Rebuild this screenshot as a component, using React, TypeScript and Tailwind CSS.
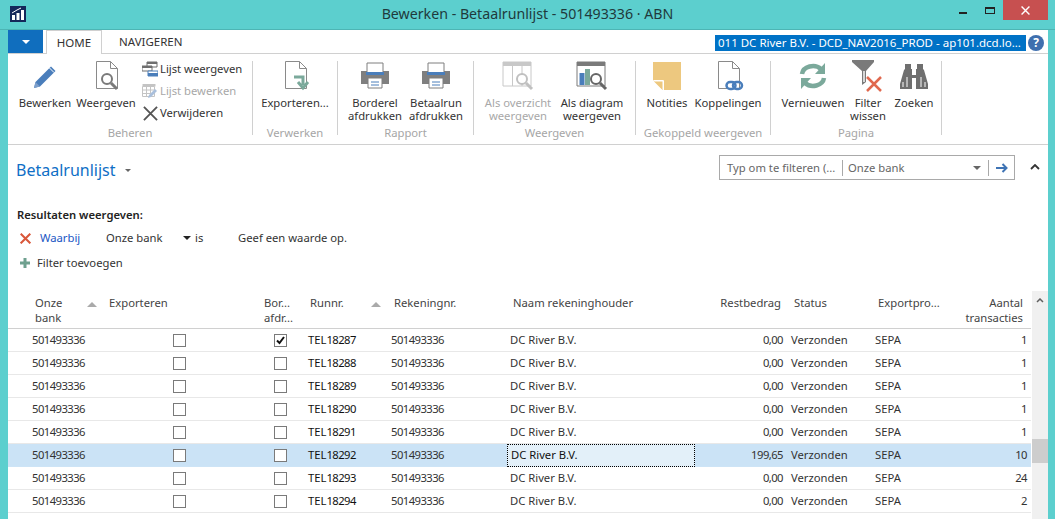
import type { ReactNode } from "react";

const font = { fontFamily: '"Noto Sans", "Open Sans", sans-serif' };

/* ribbon icons */
const Pencil = () => (
  <svg width="24" height="26" viewBox="0 0 24 26">
    <path d="M1 25l1.500-6L18 3.500l4.500 4.500L7 23.500z" fill="#4a7ebb" />
    <path d="M1 25l1.500-6 4.500 4.500z" fill="#7d9fcb" />
    <path d="M16.500 5l4.500 4.500" stroke="#fff" strokeWidth="1" />
  </svg>
);

const Doc = ({ children }: { children?: ReactNode }) => (
  <svg width="32" height="32" viewBox="0 0 32 32">
    <path d="M6.500 1.500h14l7 7v20h-21z" fill="#fff" stroke="#8a8a8a" />
    <path d="M20.500 1.500v7h7" fill="none" stroke="#8a8a8a" />
    {children}
  </svg>
);

const Lens = ({ x, y, c = "#7a7a7a" }: { x: number; y: number; c?: string }) => (
  <g transform={`translate(${x} ${y})`}>
    <circle cx="6" cy="6" r="5" fill="#fff" stroke={c} strokeWidth="2" />
    <path d="M10 10l6 6" stroke={c} strokeWidth="3" />
  </g>
);

const Printer = () => (
  <svg width="30" height="28" viewBox="0 0 30 28">
    <path d="M1 9h28v13H1z" fill="#7f7f7f" />
    <path d="M7 1h16v11H7z" fill="#fff" stroke="#7f7f7f" />
    <path d="M6 10h18v3H6z" fill="#4a7ebb" />
    <path d="M8 16h14v10H8z" fill="#fff" stroke="#7f7f7f" />
    <path d="M11 20h8M11 23h8" stroke="#4a7ebb" />
  </svg>
);

const GridLens = () => (
  <svg width="32" height="30" viewBox="0 0 32 30">
    <path d="M1 1h28v4H1z" fill="#c8c8c8" />
    <path d="M1 1h28v24H1zM10.500 5v20M20 5v20" fill="none" stroke="#c8c8c8" />
    <Lens x={14} y={12} c="#c0c0c0" />
  </svg>
);

const ChartLens = () => (
  <svg width="32" height="30" viewBox="0 0 32 30">
    <path d="M1 1h28v4H1z" fill="#7a7a7a" />
    <path d="M1 1h28v24H1z" fill="none" stroke="#7a7a7a" />
    <path d="M3.500 12h5v12h-5z" fill="#4a7ebb" />
    <path d="M9 8h5v16H9z" fill="#7ba99b" />
    <Lens x={14} y={12} c="#666" />
  </svg>
);

const Note = () => (
  <svg width="28" height="28" viewBox="0 0 28 28">
    <path d="M0 0h28v28H10L0 18z" fill="#edc87f" />
    <path d="M0 18h10v10z" fill="#fff" />
    <path d="M1 18.500h9.500V28" fill="none" stroke="#fff" />
    <path d="M1 19.500l8.500 8.500v-8.500z" fill="#edc87f" />
  </svg>
);

const Refresh = () => (
  <svg width="28" height="28" viewBox="0 0 28 28" fill="none">
    <path d="M3 12a11 9 0 0 1 19-5" stroke="#7ba99b" strokeWidth="4.500" />
    <path d="M26 1v11H16z" fill="#7ba99b" />
    <path d="M25 16a11 9 0 0 1-19 5" stroke="#7ba99b" strokeWidth="4.500" />
    <path d="M2 27V16h10z" fill="#7ba99b" />
  </svg>
);

const FilterX = () => (
  <svg width="32" height="32" viewBox="0 0 32 32">
    <path d="M0 0h22v2L14 11v11l-4 3V11L0 2z" fill="#7a7a7a" />
    <path d="M11 11h2v11h-2z" fill="#d8d8d8" />
    <path d="M15 17l14 14M29 17L15 31" stroke="#e0694f" strokeWidth="2.500" />
  </svg>
);

const Binoculars = () => (
  <svg width="28" height="26" viewBox="0 0 28 26">
    <path d="M5 1h6v5h1v6h4V6h1V1h6v5l1 1 4 14v5H16V15h-4v11H0v-5L4 7l1-1z" fill="#6f6f6f" />
    <path d="M3 19v5M7 14v10M21 14v10M25 19v5" stroke="#fff" />
  </svg>
);

const ListIcon = () => (
  <svg width="16" height="16" viewBox="0 0 16 16">
    <path d="M5 1h10v5H5z" fill="#fff" stroke="#6f6f6f" />
    <path d="M5 1h10v2H5z" fill="#6f6f6f" />
    <path d="M0 5h10v5H0z" fill="#fff" stroke="#6f6f6f" />
    <path d="M0 5h10v2H0z" fill="#6f6f6f" />
    <path d="M6 10h10v5H6z" fill="#fff" stroke="#4a7ebb" />
    <path d="M6 12h10v3H6z" fill="#4a7ebb" />
  </svg>
);

const EditListIcon = () => (
  <svg width="16" height="16" viewBox="0 0 16 16">
    <path d="M.500 3.500h12v10H.500zM4.500 3.500v10M8.500 3.500v10M.500 7h12M.500 10.500h12" fill="#fff" stroke="#c4c4c4" />
    <path d="M.500 1h13v2.500H.500z" fill="#c4c4c4" />
    <path d="M6 15l1-3 6-6 2 2-6 6z" fill="#a9bfdc" />
  </svg>
);

const Cross = ({ size, color, w }: { size: number; color: string; w: number }) => (
  <svg width={size} height={size} viewBox="0 0 16 16">
    <path d="M1 1l14 14M15 1L1 15" stroke={color} strokeWidth={w} />
  </svg>
);

const Check = ({ on }: { on?: boolean }) => (
  <span className="flex h-[13px] w-[13px] items-center justify-center border border-[#7a7a7a] bg-white">
    {on && (
      <svg width="9" height="9" viewBox="0 0 9 9">
        <path d="M1 4.500l2.500 2.500L8 1" fill="none" stroke="#111" strokeWidth="2" />
      </svg>
    )}
  </span>
);

function Btn({ w, icon, label, off }: { w: string; icon: ReactNode; label: ReactNode; off?: boolean }) {
  return (
    <div className={`flex flex-col items-center ${w}`}>
      <div className="flex h-[30px] w-full items-center justify-center">{icon}</div>
      <div className={`mt-[5px] text-center text-[11.25px] leading-[13px] whitespace-nowrap ${off ? "text-[#a8a8a8]" : "text-[#333]"}`}>
        {label}
      </div>
    </div>
  );
}

function Group({ w, pad, label, children }: { w: string; pad: string; label: string; children: ReactNode }) {
  return (
    <div className={`flex h-[74px] flex-col border-r border-[#d0d0d0] ${w}`}>
      <div className={`flex h-[65px] shrink-0 ${pad}`}>{children}</div>
      <div className="shrink-0 text-center text-[11.25px] leading-[14px] whitespace-nowrap text-[#a6a6a6]">{label}</div>
    </div>
  );
}

const SmallBtn = ({ icon, label, off }: { icon: ReactNode; label: string; off?: boolean }) => (
  <div className={`flex h-[22px] items-center gap-[2px] text-[11.25px] ${off ? "text-[#a8a8a8]" : "text-[#333]"}`}>
    <span className="flex w-4 justify-center">{icon}</span>
    {label}
  </div>
);

const cols = "grid grid-cols-[96px_150px_52px_83px_118px_188px_93px_84px_84px_74px]";
const digits = "tracking-[-0.55px]";

const runs = [
  ["18287", "0,00", "1"],
  ["18288", "0,00", "1"],
  ["18289", "0,00", "1"],
  ["18290", "0,00", "1"],
  ["18291", "0,00", "1"],
  ["18292", "199,65", "10"],
  ["18293", "0,00", "24"],
  ["18294", "0,00", "2"],
];

function Row({ run, amount, count, idx }: { run: string; amount: string; count: string; idx: number }) {
  const sel = idx === 5;
  return (
    <div className={`${cols} h-[23px] items-center border-b text-[11.25px] text-[#333] ${sel ? "border-[#cde4f6] bg-[#cbe3f6]" : "border-[#e8e8e8]"}`}>
      <div className={`pb-[1px] pl-[24px] ${digits}`}>501493336</div>
      <div className="flex justify-center"><Check /></div>
      <div className="flex justify-center"><Check on={idx === 0} /></div>
      <div className="pb-[1px] pl-[2px] text-[#111]">TEL<span className={digits}>{run}</span></div>
      <div className={`pb-[1px] pl-[2px] ${digits}`}>501493336</div>
      <div className={`flex h-[23px] items-center pb-[1px] pl-[3px] ${sel ? "border border-dotted border-black bg-[#e3f0f9] pl-[2px] text-[#111]" : ""}`}>
        DC River B.V.
      </div>
      <div className={`pr-[5px] pb-[1px] text-right ${digits}`}>{amount}</div>
      <div className="pb-[1px] pl-[3px]">Verzonden</div>
      <div className="pb-[1px] pl-[3px]">SEPA</div>
      <div className={`pr-[3px] pb-[1px] text-right ${digits}`}>{count}</div>
    </div>
  );
}

export default function App() {
  return (
    <div style={font} className="flex h-[519px] w-[1055px] flex-col overflow-hidden bg-[#5ccfce]">
      {/* title bar */}
      <div className="relative flex h-[30px] shrink-0 items-center justify-center border-b border-[#4db5b4] pb-[1px] text-[14.2px] text-[#1f3a3c]">
        <svg className="absolute top-[6px] left-[10px]" width="16" height="16" viewBox="0 0 16 16">
          <path d="M0 0h16v16H0z" fill="#14285a" />
          <path d="M2 9h3v5H2zM6.500 7h3v7h-3zM11 4h3v10h-3z" fill="#fff" />
          <path d="M2 7l5-3 4-2" fill="none" stroke="#fff" />
        </svg>
        Bewerken - Betaalrunlijst - 501493336 · ABN
        <div className="absolute top-0 right-[7px] flex items-start">
          <span className="mt-[12px] mr-[18px] h-[2px] w-[8px] bg-[#222]" />
          <span className="mt-[7px] mr-[8px] h-[7px] w-[10px] border border-t-2 border-[#222]" />
          <span className="flex h-[20px] w-[45px] items-center justify-center bg-[#c75050]">
            <Cross size={9} color="#fff" w={2.500} />
          </span>
        </div>
      </div>

      <div className="mr-[7px] ml-[8px] flex min-h-0 flex-1 flex-col bg-white">
        {/* tabs */}
        <div className="flex h-[24px] shrink-0 items-end border-b border-[#d0d0d0] text-[11.5px] text-[#333]">
          <div className="flex h-[23px] w-[35px] items-center justify-center bg-[#106ebe]">
            <span className="border-x-[4px] border-t-[4px] border-x-transparent border-t-white" />
          </div>
          <div className="relative top-[1px] ml-[3px] flex h-[24px] w-[56px] items-center justify-center border-x border-t border-[#d0d0d0] bg-white">
            HOME
          </div>
          <div className="ml-[17px] flex h-[23px] items-center">NAVIGEREN</div>
          <div className="mr-[22px] mb-[2px] ml-auto flex h-[16px] w-[311px] items-center bg-[#0072c6] pl-[3px] text-[11.5px] whitespace-nowrap text-white">
            011 DC River B.V. - DCD_NAV2016_PROD - ap101.dcd.lo...
          </div>
          <span className="absolute top-[35px] left-[1028px] flex h-4 w-4 items-center justify-center rounded-full bg-[#3f6fae] text-[12px] leading-none font-bold text-white">
            ?
          </span>
        </div>

        {/* ribbon */}
        <div className="flex h-[91px] shrink-0 border-b border-[#d0d0d0] pt-[7px]">
          <Group w="w-[245px]" pad="pl-[7px]" label="Beheren">
            <Btn w="w-[60px]" icon={<Pencil />} label="Bewerken" />
            <Btn w="w-[62px]" label="Weergeven" icon={<Doc><Lens x={11} y={13} /></Doc>} />
            <div className="-mt-[3px] ml-[5px]">
              <SmallBtn icon={<ListIcon />} label="Lijst weergeven" />
              <SmallBtn icon={<EditListIcon />} label="Lijst bewerken" off />
              <SmallBtn icon={<Cross size={15} color="#555" w={2} />} label="Verwijderen" />
            </div>
          </Group>
          <Group w="w-[85px]" pad="" label="Verwerken">
            <Btn
              w="w-[84px]"
              label="Exporteren..."
              icon={
                <Doc>
                  <path d="M15 17h9v8M19 22l5 6 5-6" fill="none" stroke="#7ba99b" strokeWidth="3" />
                </Doc>
              }
            />
          </Group>
          <Group w="w-[136px]" pad="pl-[7px] gap-[1px]" label="Rapport">
            <Btn w="w-[60px]" icon={<Printer />} label={<>Borderel<br />afdrukken</>} />
            <Btn w="w-[60px]" icon={<Printer />} label={<>Betaalrun<br />afdrukken</>} />
          </Group>
          <Group w="w-[162px]" pad="pl-[8px] gap-[2px]" label="Weergeven">
            <Btn w="w-[72px]" icon={<GridLens />} off label={<>Als overzicht<br />weergeven</>} />
            <Btn w="w-[72px]" icon={<ChartLens />} label={<>Als diagram<br />weergeven</>} />
          </Group>
          <Group w="w-[135px]" pad="pl-[6px] gap-[1px]" label="Gekoppeld weergeven">
            <Btn w="w-[50px]" icon={<Note />} label="Notities" />
            <Btn
              w="w-[70px]"
              label="Koppelingen"
              icon={
                <Doc>
                  <rect x="14.500" y="22" width="9" height="7" rx="3.500" fill="none" stroke="#4a7ebb" strokeWidth="2.500" />
                  <rect x="21" y="22" width="9" height="7" rx="3.500" fill="none" stroke="#4a7ebb" strokeWidth="2.500" />
                </Doc>
              }
            />
          </Group>
          <Group w="w-[171px]" pad="pl-[9px] gap-[2px]" label="Pagina">
            <Btn w="w-[66px]" icon={<Refresh />} label="Vernieuwen" />
            <Btn w="w-[40px]" icon={<FilterX />} label={<>Filter<br />wissen</>} />
            <Btn w="w-[48px]" icon={<Binoculars />} label="Zoeken" />
          </Group>
        </div>

        {/* page heading */}
        <div className="flex h-[46px] shrink-0 items-start pt-[10px]">
          <div className="mt-[3px] ml-[8px] flex items-center text-[16px] leading-[24px] text-[#0f6fc6]">
            Betaalrunlijst
            <span className="mt-[1px] ml-[9px] border-x-[3px] border-t-[3px] border-x-transparent border-t-[#666]" />
          </div>
          <div className="ml-auto flex h-[25px] w-[296px] items-center border border-[#a9a9a9] text-[11.25px] text-[#666]">
            <span className="w-[123px] border-r border-[#a9a9a9] pl-[7px] leading-[16px] whitespace-nowrap">Typ om te filteren (...</span>
            <span className="flex-1 pt-[1px] pl-[5px]">Onze bank</span>
            <span className="mr-[7px] border-x-[4px] border-t-[4px] border-x-transparent border-t-[#666]" />
            <span className="flex h-[16px] w-[26px] items-center justify-center border-l border-[#a9a9a9]">
              <svg width="12" height="10" viewBox="0 0 12 10">
                <path d="M0 5h10M6.500 1l4 4-4 4" fill="none" stroke="#3f74b5" strokeWidth="2" />
              </svg>
            </span>
          </div>
          <svg className="mt-[9px] mr-[8px] ml-[15px]" width="10" height="6" viewBox="0 0 10 6">
            <path d="M1 5l4-4 4 4" fill="none" stroke="#333" strokeWidth="1.800" />
          </svg>
        </div>

        {/* filter pane */}
        <div className="h-[100px] shrink-0 pl-[9px] text-[11.25px] text-[#333]">
          <div className="pt-[16px] leading-[16px] font-semibold text-[#222]">Resultaten weergeven:</div>
          <div className="mt-[7px] flex h-[16px] items-center">
            <span className="flex w-[23px] pl-[3px]"><Cross size={11} color="#d9573a" w={3} /></span>
            <span className="w-[66px] text-[#1a56c4]">Waarbij</span>
            <span className="w-[77px]">Onze bank</span>
            <span className="w-[12px]"><span className="block h-0 w-0 border-x-[4px] border-t-[4px] border-x-transparent border-t-[#222]" /></span>
            <span className="w-[43px]">is</span>
            <span>Geef een waarde op.</span>
          </div>
          <div className="mt-[9px] flex h-[16px] items-center">
            <svg className="mr-[7px] ml-[3px]" width="10" height="10" viewBox="0 0 10 10">
              <path d="M5 0v10M0 5h10" stroke="#6fa08f" strokeWidth="3" />
            </svg>
            Filter toevoegen
          </div>
        </div>

        {/* list */}
        <div className="flex min-h-0 flex-1">
          <div className="w-[1023px]">
            <div className={`${cols} h-[38px] items-center border-b border-[#d0d0d0] text-[11.25px] leading-[15px] text-[#444]`}>
              <div className="relative pl-[27px]">
                Onze<br />bank
                <span className="absolute top-[7px] left-[79px] border-x-[5px] border-b-[5px] border-x-transparent border-b-[#aaa]" />
              </div>
              <div className="self-start pt-[4px] pl-[5px]">Exporteren</div>
              <div className="pl-[10px]">Bor...<br />afdr...</div>
              <div className="relative self-start pt-[4px] pl-[4px]">
                Runnr.
                <span className="absolute top-[11px] left-[65px] border-x-[5px] border-b-[5px] border-x-transparent border-b-[#aaa]" />
              </div>
              <div className="self-start pt-[4px] pl-[5px]">Rekeningnr.</div>
              <div className="self-start pt-[4px] pl-[6px]">Naam rekeninghouder</div>
              <div className="self-start pt-[4px] pr-[7px] text-right">Restbedrag</div>
              <div className="self-start pt-[4px] pl-[6px]">Status</div>
              <div className="self-start pt-[4px] pl-[6px]">Exportpro...</div>
              <div className="pr-[7px] text-right">Aantal<br />transacties</div>
            </div>
            {runs.map(([run, amount, count], i) => (
              <Row key={run} run={run} amount={amount} count={count} idx={i} />
            ))}
          </div>
          <div className="relative ml-auto w-[16px] bg-[#f0f0f0]">
            <svg className="absolute top-[7px] left-[4px]" width="8" height="5" viewBox="0 0 8 5">
              <path d="M1 4l3-3 3 3" fill="none" stroke="#606060" strokeWidth="1.500" />
            </svg>
            <div className="absolute top-[148px] h-[24px] w-full bg-[#cdcdcd]" />
          </div>
        </div>
      </div>
    </div>
  );
}
